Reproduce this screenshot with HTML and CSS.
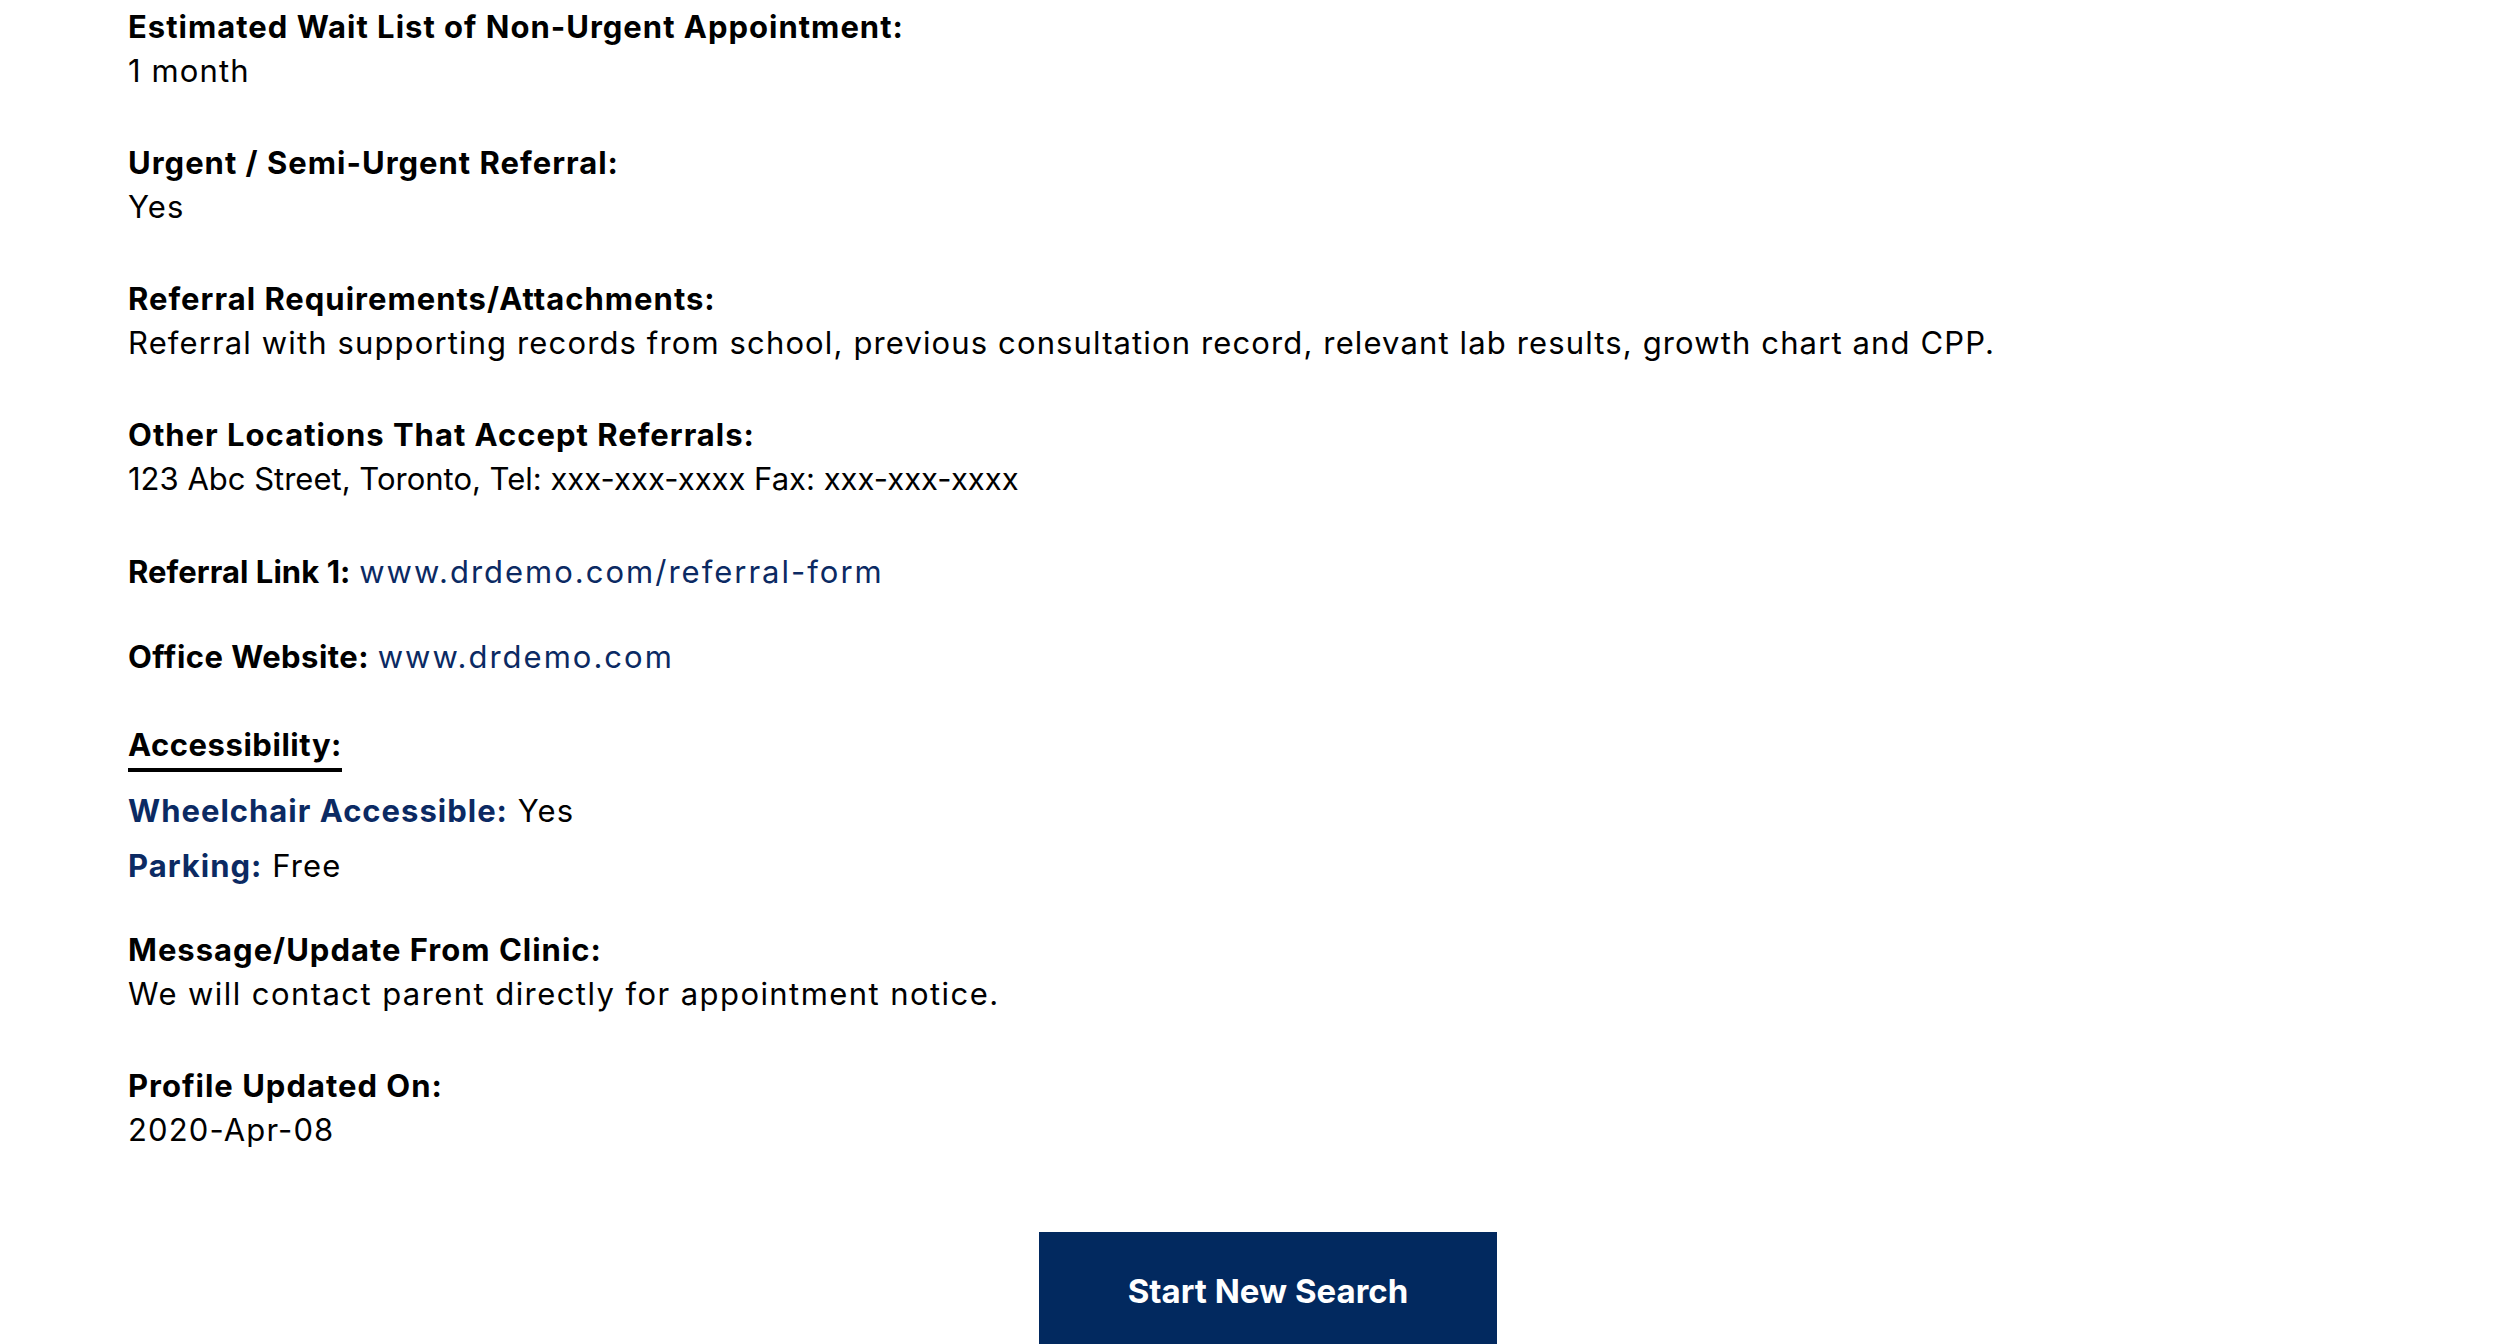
FILE: index.html
```html
<!DOCTYPE html>
<html lang="en">
<head>
<meta charset="utf-8">
<title>Clinic Profile</title>
<link rel="stylesheet" href="styles.css">
</head>
<body>
<main class="profile">
  <section class="field">
    <h3 class="label">Estimated Wait List of Non-Urgent Appointment:</h3>
    <p class="value">1 month</p>
  </section>
  <section class="field">
    <h3 class="label">Urgent / Semi-Urgent Referral:</h3>
    <p class="value">Yes</p>
  </section>
  <section class="field">
    <h3 class="label">Referral Requirements/Attachments:</h3>
    <p class="value">Referral with supporting records from school, previous consultation record, relevant lab results, growth chart and CPP.</p>
  </section>
  <section class="field field-last">
    <h3 class="label">Other Locations That Accept Referrals:</h3>
    <p class="value value-tight">123 Abc Street, Toronto, Tel: xxx-xxx-xxxx Fax: xxx-xxx-xxxx</p>
  </section>
  <p class="inline-field inline-link1"><strong class="label-inline label-inline-narrow">Referral Link 1:</strong> <a class="link" href="#">www.drdemo.com/referral-form</a></p>
  <p class="inline-field inline-site"><strong class="label-inline">Office Website:</strong> <a class="link" href="#">www.drdemo.com</a></p>
  <h3 class="section-title"><span class="section-title-text">Accessibility:</span></h3>
  <p class="access access-first"><strong class="access-label">Wheelchair Accessible:</strong> Yes</p>
  <p class="access access-last"><strong class="access-label">Parking:</strong> Free</p>
  <section class="field">
    <h3 class="label">Message/Update From Clinic:</h3>
    <p class="value value-wide">We will contact parent directly for appointment notice.</p>
  </section>
  <section class="field field-end">
    <h3 class="label">Profile Updated On:</h3>
    <p class="value">2020-Apr-08</p>
  </section>
  <div class="actions">
    <a class="btn" href="#">Start New Search</a>
  </div>
</main>
</body>
</html>
```
FILE: styles.css
```css
html, body {
  margin: 0;
  padding: 0;
  background: #ffffff;
}

body {
  font-family: Inter, "Open Sans", "Liberation Sans", sans-serif;
  color: #000000;
  font-size: 31px;
  line-height: 44px;
}

.profile {
  padding: 5px 110px 0 128px;
  display: flex;
  flex-direction: column;
}

.field {
  margin: 0 0 48px 0;
}

.field-last {
  margin-bottom: 49px;
}

.field-end {
  margin-bottom: 80px;
}

.label {
  margin: 0;
  font-size: 31px;
  line-height: 44px;
  font-weight: 700;
  letter-spacing: 1px;
}

.value {
  margin: 0;
  font-size: 31px;
  line-height: 44px;
  font-weight: 400;
  letter-spacing: 1.13px;
}

.value-tight {
  letter-spacing: 0;
}

.value-wide {
  letter-spacing: 1.43px;
}

.inline-field {
  margin: 0;
  font-size: 31px;
  line-height: 44px;
}

.inline-link1 {
  margin-bottom: 41px;
}

.inline-site {
  margin-bottom: 44px;
}

.label-inline {
  font-weight: 700;
  letter-spacing: 0.45px;
}

.label-inline-narrow {
  letter-spacing: 0.05px;
}

.link {
  color: #0b2a63;
  text-decoration: none;
  letter-spacing: 2px;
}

.section-title {
  margin: 0 0 17px 0;
  font-size: 31px;
  line-height: 44px;
  font-weight: 700;
  letter-spacing: 0.55px;
}

.section-title-text {
  display: inline-block;
  padding-bottom: 1px;
  border-bottom: 4px solid #000000;
}

.access {
  margin: 0;
  font-size: 31px;
  line-height: 44px;
  letter-spacing: 1.13px;
}

.access-first {
  margin-bottom: 11px;
}

.access-last {
  margin-bottom: 40px;
}

.access-label {
  color: #0b2a63;
  font-weight: 700;
  letter-spacing: 1px;
}

.actions {
  display: flex;
  justify-content: center;
}

.btn {
  box-sizing: border-box;
  display: flex;
  align-items: center;
  justify-content: center;
  width: 458px;
  height: 129px;
  padding-bottom: 12px;
  background: #02295f;
  color: #ffffff;
  font-weight: 700;
  font-size: 33px;
  letter-spacing: 0;
  text-decoration: none;
}
```
